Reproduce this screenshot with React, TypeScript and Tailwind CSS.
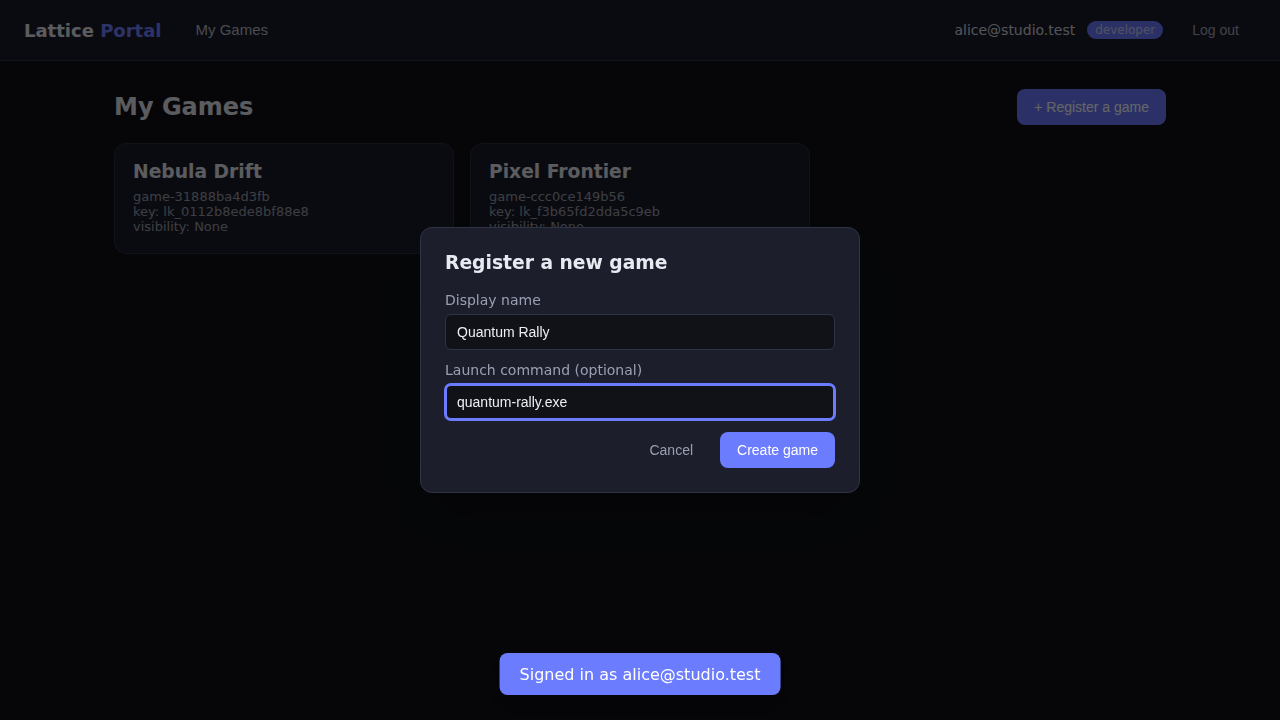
import React, { useState } from 'react';

interface Game {
  id: string;
  name: string;
  apiKey: string;
  visibility: string;
}

const games: Game[] = [
  { id: 'game-31888ba4d3fb', name: 'Nebula Drift', apiKey: 'lk_0112b8ede8bf88e8', visibility: 'None' },
  { id: 'game-ccc0ce149b56', name: 'Pixel Frontier', apiKey: 'lk_f3b65fd2dda5c9eb', visibility: 'None' },
];

function Header() {
  return (
    <header className="h-[61px] flex items-center justify-between pl-6 pr-[25px] bg-[#1a1d2a] border-b border-[#2b3346]">
      <div className="flex items-center gap-6">
        <div className="text-[18px] font-bold text-[#e6e7ec]">
          Lattice <span className="text-[#717fff]">Portal</span>
        </div>
        <button className="px-[10px] text-[15px] text-[#b7bbcc] font-['Liberation_Sans',Arial,sans-serif]">
          My Games
        </button>
      </div>
      <div className="flex items-center gap-3">
        <span className="text-[14px] text-[#d2d4dc]">alice@studio.test</span>
        <span className="rounded-full bg-[#6c7cff] px-2 h-[18px] leading-[18px] text-[12px] text-[#c9cdf0]">
          developer
        </span>
        <button className="ml-[1px] px-4 py-2 text-[14px] text-[#a3a7b8] font-['Liberation_Sans',Arial,sans-serif]">
          Log out
        </button>
      </div>
    </header>
  );
}

function GameCard({ game }: { game: Game }) {
  return (
    <div className="rounded-xl border border-[#2a2e3e] bg-[#1a1d29] px-[18px] pt-[18px] pb-[19px]">
      <h2 className="text-[18.72px] leading-5 font-bold text-[#e4e6ee]">{game.name}</h2>
      <div className="mt-[7px] text-[13px] leading-[15px] text-[#9b9ea9]">
        <div>{game.id}</div>
        <div>key: {game.apiKey}</div>
        <div>visibility: {game.visibility}</div>
      </div>
    </div>
  );
}

function RegisterDialog() {
  const [name, setName] = useState('Quantum Rally');
  const [command, setCommand] = useState('quantum-rally.exe');

  return (
    <div className="fixed inset-0 z-10 flex items-center justify-center bg-black/60">
      <div className="w-[440px] rounded-xl border border-[#2f3346] bg-[#1c1e2b] p-6 shadow-2xl">
        <h3 className="text-[18.72px] leading-[22px] font-bold text-[#e8eaf2]">Register a new game</h3>
        <label className="mt-4 block text-[14px] leading-5 text-[#9aa0b4]">Display name</label>
        <input
          value={name}
          onChange={(e) => setName(e.target.value)}
          className="mt-1 block h-9 w-full rounded-md border border-[#2f3346] bg-[#111218] px-[11px] text-[14px] text-[#eceef4] outline-none font-['Liberation_Sans',Arial,sans-serif]"
        />
        <label className="mt-[10px] block text-[14px] leading-5 text-[#9aa0b4]">Launch command (optional)</label>
        <input
          value={command}
          onChange={(e) => setCommand(e.target.value)}
          className="mt-1 block h-9 w-full rounded-md border-2 border-[#6c7cff] ring-1 ring-[#6c7cff] bg-[#111218] px-[10px] text-[14px] text-[#eceef4] outline-none font-['Liberation_Sans',Arial,sans-serif]"
        />
        <div className="mt-3 flex justify-end gap-[11px] font-['Liberation_Sans',Arial,sans-serif]">
          <button className="h-9 px-4 text-[14px] text-[#9aa0b4]">Cancel</button>
          <button className="h-9 rounded-lg bg-[#6c7cff] px-[17px] text-[14px] text-white">Create game</button>
        </div>
      </div>
    </div>
  );
}

export default function App() {
  return (
    <div className="min-h-screen bg-[#0f1015] font-['DejaVu_Sans',sans-serif]">
      <Header />
      <main className="mx-auto max-w-[1100px] px-6 pt-7">
        <div className="flex items-center justify-between">
          <h1 className="text-[24px] font-bold text-[#e4e6ee]">My Games</h1>
          <button className="h-9 rounded-lg bg-[#6c7cff] px-[17px] text-[14px] text-white font-['Liberation_Sans',Arial,sans-serif]">
            + Register a game
          </button>
        </div>
        <div className="mt-[18px] grid grid-cols-3 gap-4">
          {games.map((g) => (
            <GameCard key={g.id} game={g} />
          ))}
        </div>
      </main>

      <RegisterDialog />

      <div className="fixed bottom-[25px] left-1/2 z-20 -translate-x-1/2 rounded-lg bg-[#6c7cff] px-5 h-[42px] flex items-center text-[16px] leading-[42px] pt-px text-white shadow-lg">
        Signed in as alice@studio.test
      </div>
    </div>
  );
}
